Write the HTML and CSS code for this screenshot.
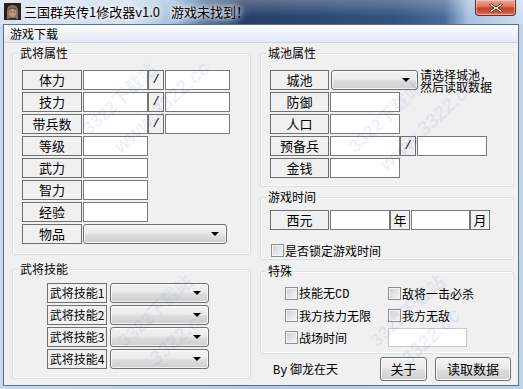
FILE: index.html
```html
<!DOCTYPE html>
<html>
  <head>
    <meta charset="utf-8">
    <title>三国群英传1修改器v1.0</title>
    <link rel="stylesheet" href="styles.css">
  </head>
  <body>
    <div class="window">
      <div class="titlebar">
        <svg class="app-icon" width="17" height="17" viewBox="0 0 17 17">
          <rect width="17" height="17" fill="#2a1e18"/>
          <path d="M3 17 L3 8 Q3 2 8.5 2 Q14 2 14 8 L14 17 Z" fill="#7d7670"/>
          <ellipse cx="8.5" cy="9.5" rx="3.6" ry="4.6" fill="#c99572"/>
          <path d="M4.8 7.5 Q8.5 4 12.2 7.5 L12.2 5.5 Q8.5 2.8 4.8 5.5 Z" fill="#5c5650"/>
          <rect x="6.4" y="8.6" width="1.4" height="0.9" fill="#3a2418"/>
          <rect x="9.3" y="8.6" width="1.4" height="0.9" fill="#3a2418"/>
          <path d="M2 17 Q8.5 12.5 15 17 Z" fill="#4a2a1e"/>
        </svg>
        <span class="title">三国群英传1修改器v1.0<span class="status">游戏未找到！</span></span>
        <div class="close-btn">
          <svg width="16" height="12" viewBox="0 0 16 12">
            <path d="M3 1.5 L8 5 L13 1.5 L14.5 3 L10 6 L14.5 9 L13 10.5 L8 7 L3 10.5 L1.5 9 L6 6 L1.5 3 Z" fill="#fff" stroke="#5a2418" stroke-width="1"/>
          </svg>
        </div>
      </div>

      <div class="frame">
        <div class="menubar"><span class="menu-item">游戏下载</span></div>

        <div class="client">
          <div class="col col-left">
            <fieldset class="group group-general">
              <legend>武将属性</legend>
              <div class="rows">
                <div class="row">
                  <div class="lbl">体力</div>
                  <input class="field w65" type="text">
                  <div class="lbl slash">/</div>
                  <input class="field w65" type="text">
                </div>
                <div class="row">
                  <div class="lbl">技力</div>
                  <input class="field w65" type="text">
                  <div class="lbl slash">/</div>
                  <input class="field w65" type="text">
                </div>
                <div class="row">
                  <div class="lbl">带兵数</div>
                  <input class="field w65" type="text">
                  <div class="lbl slash">/</div>
                  <input class="field w65" type="text">
                </div>
                <div class="row">
                  <div class="lbl">等级</div>
                  <input class="field w65" type="text">
                </div>
                <div class="row">
                  <div class="lbl">武力</div>
                  <input class="field w65" type="text">
                </div>
                <div class="row">
                  <div class="lbl">智力</div>
                  <input class="field w65" type="text">
                </div>
                <div class="row">
                  <div class="lbl">经验</div>
                  <input class="field w65" type="text">
                </div>
                <div class="row">
                  <div class="lbl">物品</div>
                  <div class="combo combo-item"></div>
                </div>
              </div>
            </fieldset>

            <fieldset class="group group-skills">
              <legend>武将技能</legend>
              <div class="rows">
                <div class="row">
                  <div class="lbl lbl-skill">武将技能1</div>
                  <div class="combo combo-skill"></div>
                </div>
                <div class="row">
                  <div class="lbl lbl-skill">武将技能2</div>
                  <div class="combo combo-skill"></div>
                </div>
                <div class="row">
                  <div class="lbl lbl-skill">武将技能3</div>
                  <div class="combo combo-skill"></div>
                </div>
                <div class="row">
                  <div class="lbl lbl-skill">武将技能4</div>
                  <div class="combo combo-skill"></div>
                </div>
              </div>
            </fieldset>
          </div>

          <div class="col col-right">
            <fieldset class="group group-city">
              <legend>城池属性</legend>
              <div class="rows">
                <div class="row">
                  <div class="lbl lbl-r">城池</div>
                  <div class="combo combo-city"></div>
                  <div class="note">请选择城池，<br>然后读取数据</div>
                </div>
                <div class="row">
                  <div class="lbl lbl-r">防御</div>
                  <input class="field w70" type="text">
                </div>
                <div class="row">
                  <div class="lbl lbl-r">人口</div>
                  <input class="field w70" type="text">
                </div>
                <div class="row">
                  <div class="lbl lbl-r">预备兵</div>
                  <input class="field w70" type="text">
                  <div class="lbl slash">/</div>
                  <input class="field w70" type="text">
                </div>
                <div class="row">
                  <div class="lbl lbl-r">金钱</div>
                  <input class="field w70" type="text">
                </div>
              </div>
            </fieldset>

            <fieldset class="group group-time">
              <legend>游戏时间</legend>
              <div class="rows">
                <div class="row">
                  <div class="lbl lbl-r">西元</div>
                  <input class="field year" type="text">
                  <div class="lbl unit">年</div>
                  <input class="field month" type="text">
                  <div class="lbl unit">月</div>
                </div>
                <label class="check check-lock"><span class="box"></span><span>是否锁定游戏时间</span></label>
              </div>
            </fieldset>

            <fieldset class="group group-special">
              <legend>特殊</legend>
              <div class="special-grid">
                <label class="check"><span class="box"></span><span>技能无<span class="latin">CD</span></span></label>
                <label class="check"><span class="box"></span><span>敌将一击必杀</span></label>
                <label class="check"><span class="box"></span><span>我方技力无限</span></label>
                <label class="check"><span class="box"></span><span>我方无敌</span></label>
                <label class="check"><span class="box"></span><span>战场时间</span></label>
                <input class="field field-light battle-time" type="text">
              </div>
            </fieldset>

            <div class="footer">
              <span class="credit"><span class="latin">By</span> 御龙在天</span>
              <button class="btn btn-about">关于</button>
              <button class="btn btn-read">读取数据</button>
            </div>
          </div>

          <div class="wm wm-1"><div>3322下载站</div><div class="wm-url">www.3322.cc</div></div>
          <div class="wm wm-2"><div>3322下载站</div><div class="wm-url">www.3322.cc</div></div>
          <div class="wm wm-3"><div>3322下载站</div><div class="wm-url">3322.cc</div></div>
          <div class="wm wm-4"><div>3322下载站</div><div class="wm-url">3322.cc</div></div>
        </div>
      </div>
    </div>
  </body>
</html>
```

FILE: styles.css
```css
body {
  margin: 0;
  font-family: "Noto Sans CJK SC", "Liberation Sans", sans-serif;
  font-size: 12px;
  color: #000;
}
.window {
  width: 523px;
  height: 389px;
  display: flex;
  flex-direction: column;
  background: linear-gradient(to right, #c6daef, #b0cbe8 50%, #bcd3eb);
  overflow: hidden;
}
.titlebar {
  height: 24px;
  flex: none;
  display: flex;
  align-items: flex-start;
  background:
    linear-gradient(rgba(255, 255, 255, 0.25), rgba(255, 255, 255, 0) 70%),
    linear-gradient(to right, #d7e4f2 0%, #cddcee 26%, #a6bfdc 33%, #4f6f9b 39%, #253e66 46%, #2c4973 62%, #355380 76%, #4b6b97 85%, #a8c3e1 89.5%, #cde0f2 100%);
}
.app-icon {
  margin: 3px 0 0 4px;
  flex: none;
}
.title {
  margin: 4px 0 0 3px;
  font-size: 13px;
  line-height: 16px;
  white-space: nowrap;
  text-shadow: 0 0 4px #fff, 0 0 8px #fff, 0 0 12px rgba(255, 255, 255, 0.8);
}
.status {
  margin-left: 11px;
}
.close-btn {
  margin: 0 7px 0 auto;
  width: 41px;
  height: 16px;
  box-sizing: border-box;
  border: 1px solid #6a2b20;
  border-top: none;
  border-radius: 0 0 4px 4px;
  background: linear-gradient(#e9a899, #d97760 45%, #c5442c 52%, #cd5437 80%, #e3896c);
  box-shadow: inset 0 0 0 1px rgba(255, 220, 210, 0.5);
  display: flex;
  align-items: center;
  justify-content: center;
}
.frame {
  flex: 1;
  margin: 0 4px 3px 3px;
  border: 1px solid #5e7089;
  display: flex;
  flex-direction: column;
  min-height: 0;
}
.menubar {
  height: 17px;
  flex: none;
  border-bottom: 1px solid #cdd5e2;
  background: linear-gradient(#fcfdfe, #e2e8f3);
  padding-left: 6px;
  line-height: 17px;
}
.client {
  flex: 1;
  position: relative;
  display: flex;
  gap: 9px;
  padding: 3px 0 0 8px;
  background: #f0f0f0;
  overflow: hidden;
}
.col {
  display: flex;
  flex-direction: column;
}
.col-left {
  width: 239px;
}
.col-right {
  width: 254px;
}
.group {
  margin: 0;
  padding: 0;
  min-width: 0;
  border: 1px solid #d5dfe5;
  border-radius: 3px;
  box-shadow: inset 0 0 0 1px #fff;
}
.group legend {
  margin-left: 5px;
  padding: 0 2px;
  font-size: 12px;
  line-height: 14px;
  background: #f0f0f0;
}
.rows {
  display: flex;
  flex-direction: column;
  gap: 2px;
}
.row {
  display: flex;
  height: 20px;
}
.lbl {
  width: 60px;
  height: 20px;
  box-sizing: border-box;
  flex: none;
  border: 1px solid #707070;
  background: #f0f0f0;
  text-align: center;
  font-size: 13px;
  line-height: 18px;
  white-space: nowrap;
}
.field {
  margin: 0;
  padding: 0;
  height: 20px;
  box-sizing: border-box;
  flex: none;
  border: 1px solid #7a7a7a;
  background: #fff;
  outline: none;
}
.row .lbl + .field {
  margin-left: 1px;
}
.w65 {
  width: 65px;
}
.w70 {
  width: 70px;
}
.slash {
  width: 16px;
  font-family: "Liberation Mono", monospace;
  font-size: 12px;
}
.combo {
  position: relative;
  height: 20px;
  box-sizing: border-box;
  border: 1px solid #707070;
  border-radius: 3px;
  background: linear-gradient(#f3f3f3, #ebebeb 45%, #dddddd 55%, #cfcfcf);
  box-shadow: inset 0 0 0 1px rgba(255, 255, 255, 0.7);
}
.combo::after {
  content: "";
  position: absolute;
  right: 7px;
  top: 7px;
  border-left: 4px solid transparent;
  border-right: 4px solid transparent;
  border-top: 4px solid #000;
}

/* 武将属性 */
.group-general .rows {
  padding: 10px 0 10px 9px;
}
.combo-item {
  width: 144px;
  margin-left: 1px;
}

/* 武将技能 */
.group-skills {
  margin-top: 7px;
}
.group-skills .rows {
  padding: 7px 0 9px 34px;
}
.lbl-skill {
  font-size: 12px;
}
.combo-skill {
  width: 99px;
  margin-left: 3px;
}

/* 城池属性 */
.group-city .rows {
  padding: 10px 0 8px 9px;
}
.lbl-r {
  width: 59px;
}
.combo-city {
  width: 87px;
  margin-left: 2px;
}
.note {
  margin-left: 2px;
  font-size: 12px;
  line-height: 12px;
  margin-top: -1px;
  white-space: nowrap;
}

/* 游戏时间 */
.group-time {
  margin-top: 3px;
}
.group-time .rows {
  padding: 6px 0 0 9px;
}
.year {
  width: 60px;
  margin-left: 2px;
}
.unit {
  width: 20px;
  font-size: 13px;
}
.month {
  width: 59px;
}
.check {
  display: flex;
  align-items: center;
  height: 18px;
  font-size: 12px;
  white-space: nowrap;
}
.check .box {
  width: 13px;
  height: 13px;
  box-sizing: border-box;
  flex: none;
  margin-right: 1px;
  border: 1px solid #8e8f8f;
  background: linear-gradient(135deg, #cbcfd5, #f7f7f7);
  box-shadow: inset 0 0 0 1px #f4f4f4;
}
.check-lock {
  margin: 9px 0 0 1px;
}

/* 特殊 */
.group-special {
  margin-top: 4px;
}
.special-grid {
  display: grid;
  grid-template-columns: 103px auto;
  grid-auto-rows: 22px;
  align-items: center;
  padding: 4px 0 5px 24px;
}
.latin {
  font-family: "Liberation Mono", monospace;
}
.field-light {
  border-color: #c4c6cc;
}
.battle-time {
  width: 79px;
  height: 19px;
}

.footer {
  flex: 1;
  display: flex;
  align-items: center;
  gap: 8px;
  padding: 0 3px 2px 13px;
}
.credit {
  margin-right: auto;
  font-size: 12px;
  white-space: nowrap;
}
.btn {
  height: 24px;
  margin: 0;
  padding: 0;
  box-sizing: border-box;
  border: 1px solid #707070;
  border-radius: 3px;
  background: linear-gradient(#f2f2f2, #ebebeb 45%, #dddddd 55%, #cfcfcf);
  box-shadow: inset 0 0 0 1px #fcfcfc;
  font-family: "Noto Sans CJK SC", sans-serif;
  font-size: 13px;
  line-height: 20px;
  color: #000;
}
.btn-about {
  width: 47px;
}
.btn-read {
  width: 76px;
}

/* 水印 */
.wm {
  position: absolute;
  pointer-events: none;
  transform: rotate(-43deg);
  transform-origin: left top;
  color: rgba(70, 100, 190, 0.09);
  font-family: "Liberation Sans", "Noto Sans CJK SC", sans-serif;
  font-weight: bold;
  font-size: 18px;
  line-height: 22px;
  white-space: nowrap;
}
.wm-url {
  font-size: 20px;
  font-style: italic;
  margin: 12px 0 0 10px;
}
.wm-1 {
  left: 74px;
  top: 80px;
}
.wm-2 {
  left: 340px;
  top: 98px;
}
.wm-3 {
  left: 110px;
  top: 292px;
}
.wm-4 {
  left: 362px;
  top: 292px;
}
```
